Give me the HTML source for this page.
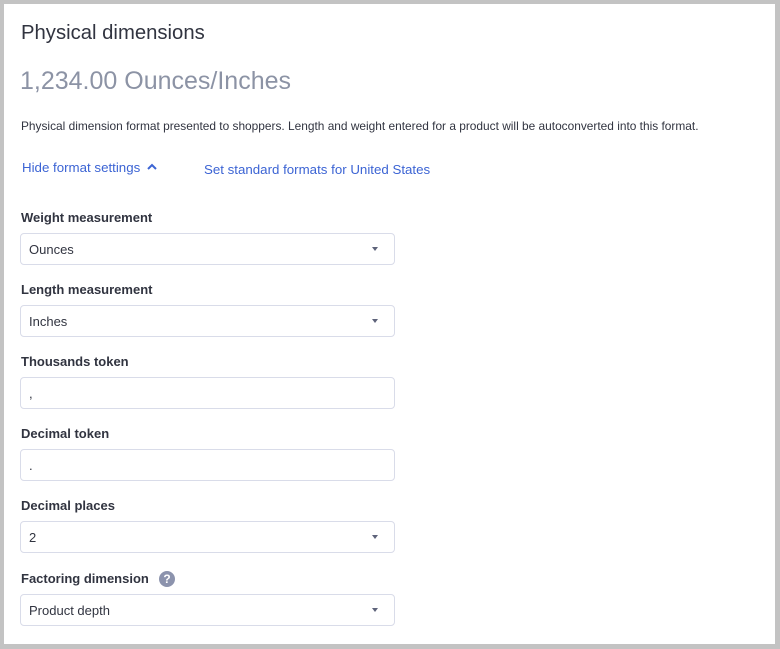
<!DOCTYPE html>
<html><head><style>
body{margin:0;width:780px;height:649px;background:#c3c3c3;font-family:"Liberation Sans",sans-serif;position:relative;overflow:hidden}
.p{position:absolute;left:4px;top:4px;width:771px;height:640px;background:#fff}
.a{position:absolute;white-space:nowrap}
.l{font-size:13px;font-weight:bold;color:#313440;left:21px}
.i{position:absolute;left:20px;width:373px;height:30px;border:1px solid #d9dce9;border-radius:4px;background:#fff;font-size:13px;color:#313440;box-sizing:content-box}
.i span{position:absolute;left:8px;top:8px}
.i b{position:absolute;right:16px;top:13px;width:0;height:0;border-left:3.5px solid transparent;border-right:3.5px solid transparent;border-top:4px solid #5e637a}
</style></head><body>
<div class="p"></div>
<div class="a" style="left:21px;top:22px;font-size:20.3px;color:#313440">Physical dimensions</div>
<div class="a" style="left:20px;top:67px;font-size:25px;color:#8c93a5">1,234.00 Ounces/Inches</div>
<div class="a" style="left:21px;top:119px;font-size:11.9px;color:#313440">Physical dimension format presented to shoppers. Length and weight entered for a product will be autoconverted into this format.</div>
<div class="a" style="left:22px;top:160px;font-size:13.3px;color:#3c64d4">Hide format settings <svg width="12" height="10" viewBox="0 0 12 10" style="margin-left:2px"><path d="M2 7L6 3L10 7" stroke="#3c64d4" stroke-width="2" fill="none"/></svg></div>
<div class="a" style="left:204px;top:162px;font-size:13.3px;color:#3c64d4">Set standard formats for United States</div>
<div class="a l" style="top:210px">Weight measurement</div>
<div class="i" style="top:233px"><span>Ounces</span><b></b></div>
<div class="a l" style="top:282px">Length measurement</div>
<div class="i" style="top:305px"><span>Inches</span><b></b></div>
<div class="a l" style="top:354px">Thousands token</div>
<div class="i" style="top:377px"><span>,</span></div>
<div class="a l" style="top:426px">Decimal token</div>
<div class="i" style="top:449px"><span>.</span></div>
<div class="a l" style="top:498px">Decimal places</div>
<div class="i" style="top:521px"><span>2</span><b></b></div>
<div class="a l" style="top:571px">Factoring dimension</div>
<div class="a" style="left:159px;top:571px;width:16px;height:16px;border-radius:50%;background:#8c93ad;color:#fff;font-size:12px;font-weight:bold;text-align:center;line-height:16px">?</div>
<div class="i" style="top:594px"><span>Product depth</span><b></b></div>
</body></html>
